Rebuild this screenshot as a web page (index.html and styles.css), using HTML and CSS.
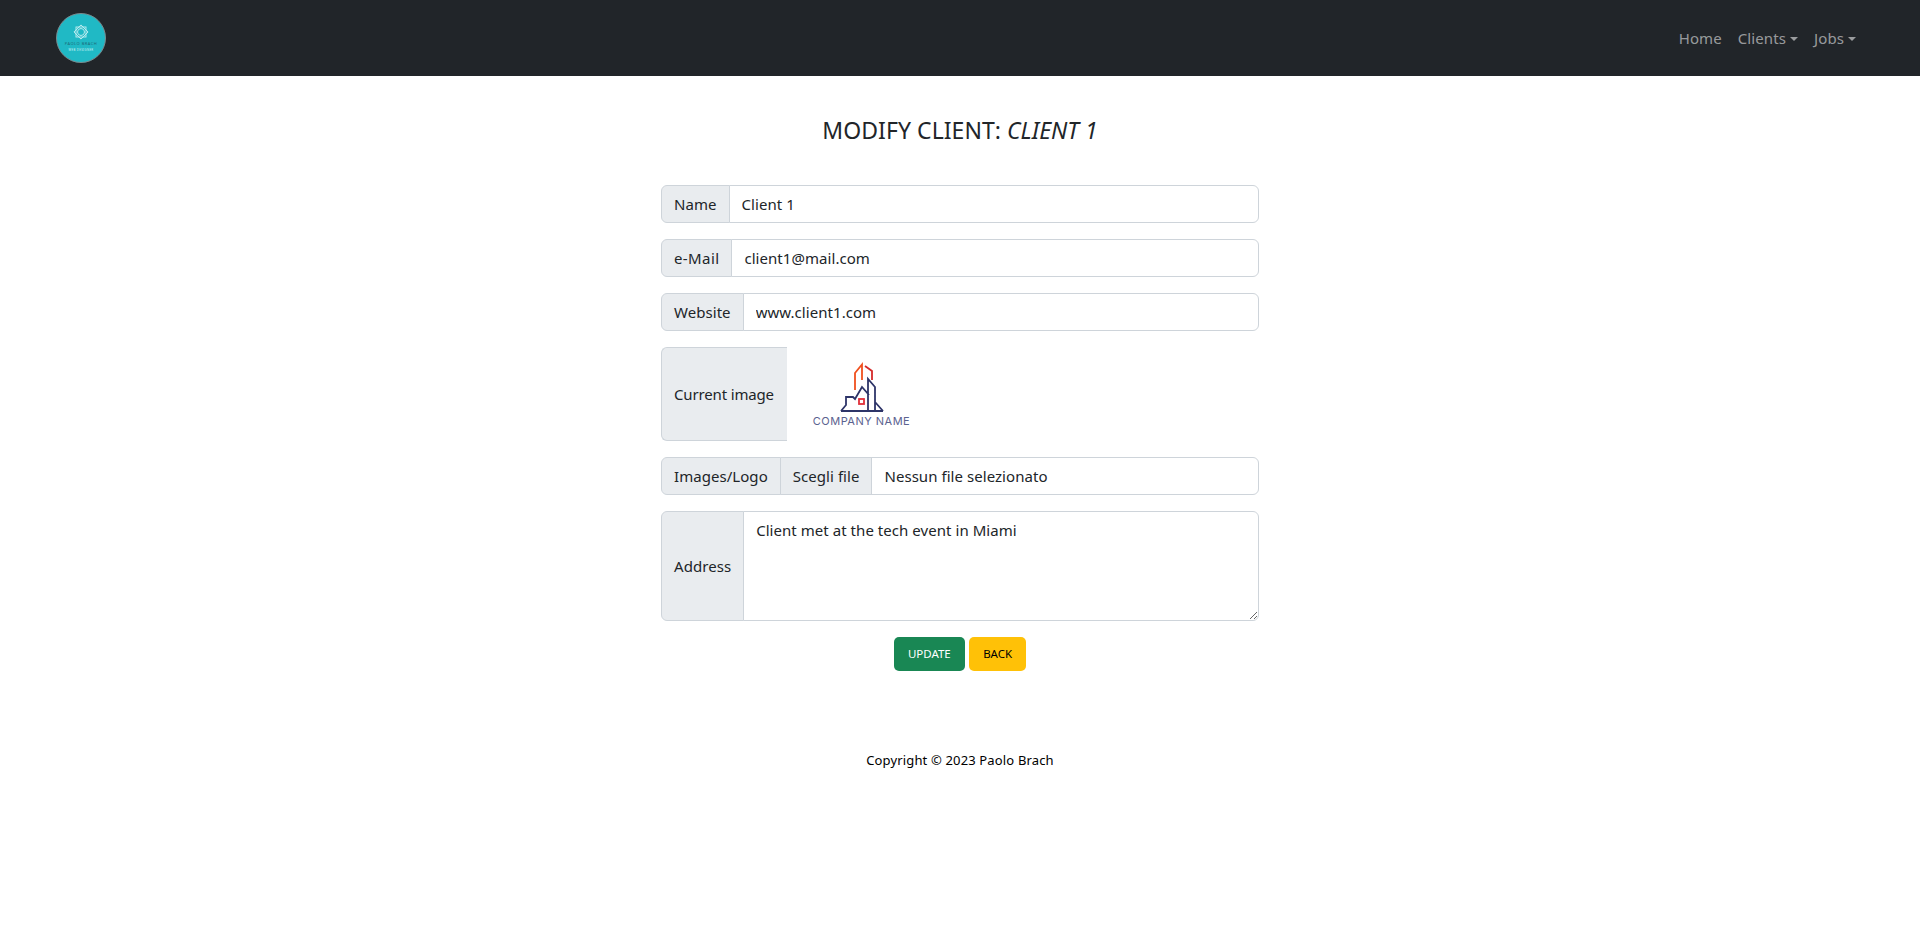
FILE: index.html
```html
<!DOCTYPE html>
<html lang="en">
<head>
<meta charset="utf-8">
<title>Modify client</title>
<link rel="stylesheet" href="styles.css">
</head>
<body>
<nav class="navbar">
  <a class="brand" href="#">
    <svg class="brand-logo" width="50" height="50" viewBox="0 0 50 50">
      <circle cx="25" cy="25" r="24.500" fill="#20b9c5" stroke="#7a8a8d" stroke-width="1"/>
      <g fill="none" stroke="#c4eef1" stroke-width="0.900">
        <rect x="20" y="14" width="10" height="10"/>
        <rect x="20" y="14" width="10" height="10" transform="rotate(45 25 19)"/>
        <circle cx="25" cy="19" r="3.500"/>
      </g>
      <text class="brand-title" x="25" y="32" text-anchor="middle">PAOLO BRACH</text>
      <text class="brand-sub" x="25" y="37.500" text-anchor="middle">WEB DESIGNER</text>
    </svg>
  </a>
  <ul class="nav-list">
    <li><a href="#">Home</a></li>
    <li><a class="caret" href="#">Clients</a></li>
    <li><a class="caret" href="#">Jobs</a></li>
  </ul>
</nav>
<main class="content">
  <h1 class="title">MODIFY CLIENT: <em>CLIENT 1</em></h1>
  <form class="client-form">
    <div class="group">
      <span class="addon">Name</span>
      <input class="control" type="text" value="Client 1">
    </div>
    <div class="group">
      <span class="addon addon-wide">e-Mail</span>
      <input class="control" type="text" value="client1@mail.com">
    </div>
    <div class="group">
      <span class="addon">Website</span>
      <input class="control" type="text" value="www.client1.com">
    </div>
    <div class="group group-image">
      <span class="addon addon-tight">Current image</span>
      <svg class="company" width="130" height="94" viewBox="0 0 130 94">
        <g fill="none" stroke-width="1.800" transform="translate(13 8)">
          <path d="M55 35V18l7-8.500V25" stroke="#f0501e"/>
          <path d="M65 11l7 5v9" stroke="#d42a2a"/>
          <path d="M41 56h42M41 56l5-6v-8h7l2 2 7-12 7 8M68 56V24l7 8v24M75 47l8 9" stroke="#2d3468"/>
          <rect x="59" y="44" width="5" height="5" stroke="#e0303a"/>
        </g>
        <text class="company-name" x="74.500" y="78" text-anchor="middle">COMPANY NAME</text>
      </svg>
    </div>
    <div class="group">
      <span class="addon">Images/Logo</span>
      <label class="file">
        <span class="file-button">Scegli file</span>
        <span class="file-name">Nessun file selezionato</span>
      </label>
    </div>
    <div class="group group-address">
      <span class="addon">Address</span>
      <textarea class="control area">Client met at the tech event in Miami</textarea>
    </div>
    <div class="actions">
      <button class="btn btn-update" type="button">UPDATE</button>
      <button class="btn btn-back" type="button">BACK</button>
    </div>
  </form>
  <footer class="copyright">Copyright © 2023 Paolo Brach</footer>
</main>
</body>
</html>
```
FILE: styles.css
```css
* { box-sizing: border-box; }
html, body { margin: 0; height: 100%; }
body {
  background: #fff;
  color: #212529;
  font-family: "Noto Sans", "Open Sans", sans-serif;
  font-size: 15px;
  line-height: 24px;
  letter-spacing: 0.05px;
}
.navbar {
  height: 76px;
  background: #212529;
  display: flex;
  align-items: center;
  justify-content: space-between;
  padding: 0 56px;
}
.brand { display: block; height: 50px; }
.brand-logo { display: block; }
.brand-title { font-size: 4px; fill: #1d6d78; letter-spacing: 0.5px; }
.brand-sub { font-size: 2.800px; fill: #d5f3f5; letter-spacing: 0.4px; }
.nav-list {
  list-style: none;
  display: flex;
  margin: 0;
  padding: 0;
  letter-spacing: 0.1px;
}
.nav-list a {
  display: block;
  padding: 8px;
  color: rgba(255, 255, 255, .55);
  text-decoration: none;
}
.caret::after {
  content: "";
  display: inline-block;
  margin-left: 4px;
  vertical-align: 3px;
  border-top: 4.800px solid;
  border-left: 4.800px solid transparent;
  border-right: 4.800px solid transparent;
}
.content { display: flex; flex-direction: column; align-items: center; }
.title {
  margin: 40px 0 40px;
  font-size: 23px;
  line-height: 29px;
  font-weight: 400;
}
.client-form { width: 598px; display: flex; flex-direction: column; gap: 16px; }
.group { display: flex; min-height: 38px; }
.addon {
  display: flex;
  align-items: center;
  padding: 6px 12px;
  background: #e9ecef;
  border: 1px solid #ced4da;
  border-radius: 6px 0 0 6px;
  white-space: nowrap;
}
.addon-wide { letter-spacing: 0.4px; }
.addon-tight { letter-spacing: -0.15px; border-right: 0; padding-right: 13px; }
.control {
  flex: 1;
  min-width: 0;
  margin-left: -1px;
  padding: 6px 12px;
  border: 1px solid #ced4da;
  border-radius: 0 6px 6px 0;
  background: #fff;
  color: #212529;
  font: inherit;
  letter-spacing: inherit;
  outline: none;
}
.group-image { height: 94px; }
.company { display: block; }
.company-name { font-size: 11px; fill: #5b628f; font-family: "Inter", sans-serif; letter-spacing: 0.5px; }
.file {
  flex: 1;
  display: flex;
  margin-left: -1px;
  border: 1px solid #ced4da;
  border-radius: 0 6px 6px 0;
  overflow: hidden;
}
.file-button {
  padding: 6px 12px;
  background: #e9ecef;
  border-right: 1px solid #ced4da;
}
.file-name { padding: 6px 12px; }
.group-address { height: 110px; }
.area { resize: vertical; }
.actions { display: flex; justify-content: center; gap: 4px; }
.btn {
  height: 34px;
  padding: 0 14.200px;
  border: 0;
  border-radius: 5px;
  font: inherit;
  font-size: 11.500px;
  line-height: 34px;
}
.btn-update { background: #198754; color: #fff; }
.btn-back { background: #ffc107; color: #000; }
.copyright {
  margin-top: 79px;
  color: #000;
  font-size: 13px;
  line-height: 21px;
  letter-spacing: 0.15px;
}
```
